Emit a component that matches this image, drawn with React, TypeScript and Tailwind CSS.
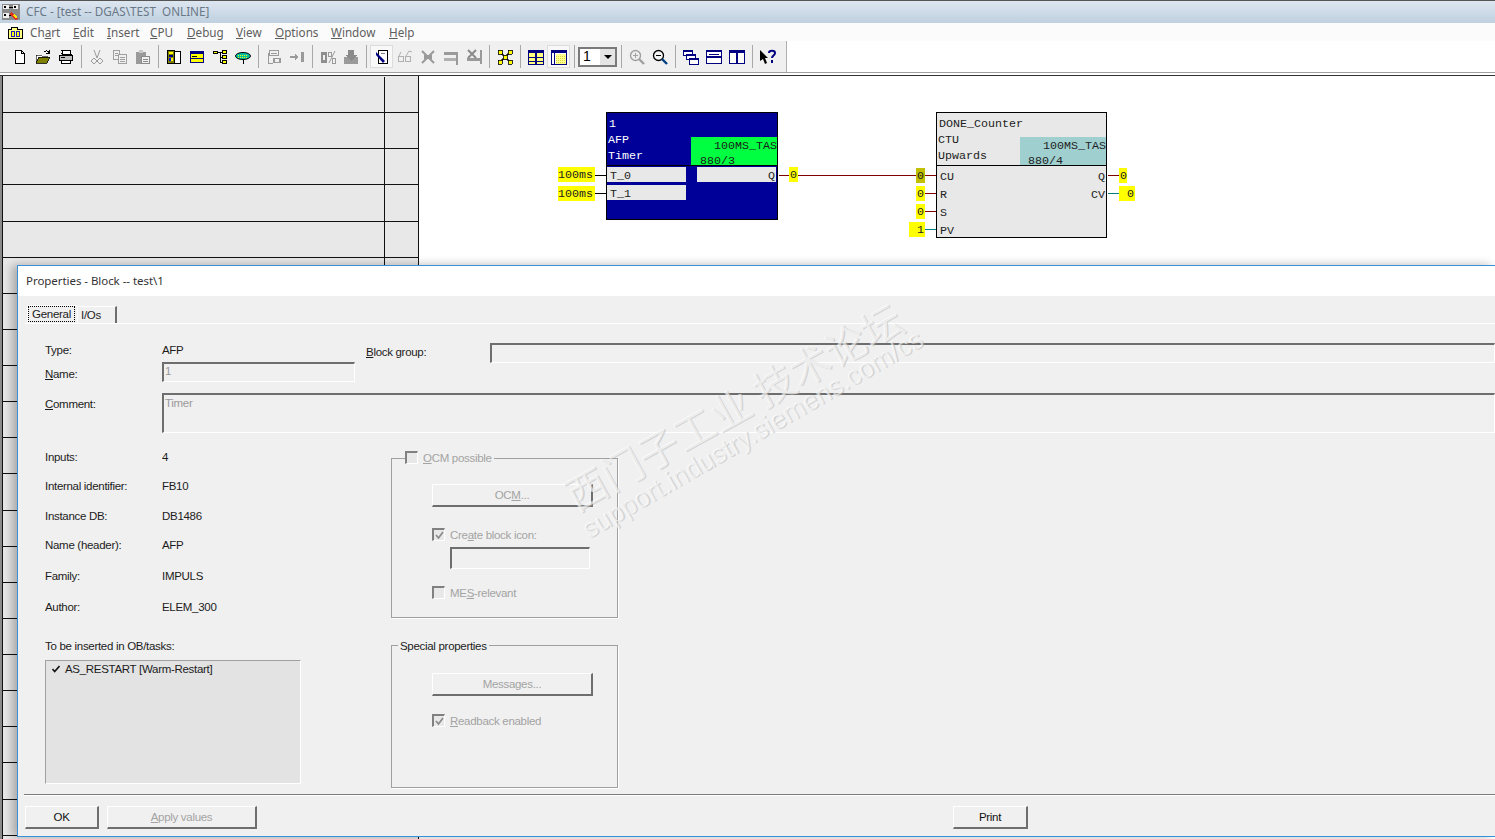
import type { ReactNode } from "react";

const ui = "font-['Liberation_Sans',Arial,sans-serif] text-[11.5px] tracking-[-0.3px]";
const mono = "font-['Liberation_Mono','Courier_New',monospace] text-[11.67px] leading-[14px]";

function Ico({ children }: { children: ReactNode }) {
  return (
    <svg width="16" height="16" viewBox="0 0 16 16" shapeRendering="crispEdges">
      {children}
    </svg>
  );
}

const icons: Record<string, ReactNode> = {
  new: (
    <path d="M3.5 1.5h6l3 3v10h-9zM9.5 1.5v3h3" fill="#fff" stroke="#000" />
  ),
  open: (
    <>
      <path d="M1 6h5l1 1h5v2H4l-3 5z" fill="#fff" stroke="#000" strokeWidth="0.6" />
      <path d="M1 14l3-6h11l-3 6z" fill="#808000" stroke="#000" strokeWidth="0.8" />
      <path d="M9 3c2-2 4-1 5 1M14 1v3h-3" fill="none" stroke="#000" />
    </>
  ),
  print: (
    <>
      <path d="M4 1.5h8l1 4H5z" fill="#fff" stroke="#000" />
      <path d="M1.5 6.5h13v5h-13z" fill="#c0c0c0" stroke="#000" />
      <path d="M3.5 11.5h9v3h-9z" fill="#fff" stroke="#000" />
      <path d="M3 8.5h4M3 4.5h1" stroke="#000" />
    </>
  ),
  cut: (
    <>
      <path d="M5 1l3 8M11 1L8 9" stroke="#9a9a9a" fill="none" shapeRendering="auto" />
      <circle cx="5" cy="12" r="2.2" fill="none" stroke="#9a9a9a" />
      <circle cx="11" cy="12" r="2.2" fill="none" stroke="#9a9a9a" />
    </>
  ),
  copy: (
    <>
      <path d="M1.5 1.5h6v9h-6z" fill="#f0f0f0" stroke="#a0a0a0" />
      <path d="M6.5 5.5h8v9h-8z" fill="#f0f0f0" stroke="#a0a0a0" />
      <path d="M3 4h3M3 6h3M8 8h5M8 10h5M8 12h5" stroke="#a0a0a0" />
    </>
  ),
  paste: (
    <>
      <path d="M1 3h10v12H1z" fill="#9a9a9a" />
      <path d="M4 1h4v3H4z" fill="#c8c8c8" />
      <path d="M6.5 7.5h8v7h-8z" fill="#f0f0f0" stroke="#8a8a8a" />
      <path d="M8 10h5M8 12h5" stroke="#8a8a8a" />
    </>
  ),
  book: (
    <>
      <path d="M1.5 1.5h7v13h-7z" fill="#808000" stroke="#000" />
      <path d="M3 3h4v2H3z" fill="#ffff00" />
      <path d="M3 6h4v2H3z" fill="#000080" />
      <path d="M3 9h2v3H3z" fill="#0000ff" />
      <path d="M5 9h2v3H5z" fill="#ffff00" />
      <path d="M8.5 2.5h6v12h-6z" fill="#fff" stroke="#000" />
    </>
  ),
  win: (
    <>
      <path d="M1.5 2.5h13v11h-13z" fill="#ffff00" stroke="#000080" />
      <path d="M1 2h14v3H1z" fill="#000080" />
      <path d="M3 7h5v1H3z" fill="#000" />
      <path d="M1 9h14v1H1z" fill="#000080" />
    </>
  ),
  tree: (
    <>
      <path d="M1.5 2.5h4v2h-4zM10.5 1.5h4v3h-4zM10.5 6.5h4v3h-4zM10.5 11.5h4v3h-4z" fill="#ffff00" stroke="#000" />
      <path d="M5 3.5h5M8 3.5v9M8 8h2.5M8 13h2.5" stroke="#000" fill="none" />
    </>
  ),
  ellipse: (
    <>
      <ellipse cx="8" cy="7" rx="7.5" ry="3.5" fill="#00c0a0" stroke="#000" shapeRendering="auto" />
      <path d="M3 6h10M3 8h10" stroke="#ffff00" strokeDasharray="1 1" />
      <path d="M8 10v5" stroke="#000" />
    </>
  ),
  grayA: (
    <>
      <path d="M3.5 1.5h9v5h-9zM2.5 3.5v11h4M8 9.5h6v4H8z" fill="none" stroke="#9a9a9a" strokeWidth="1.4" />
      <path d="M5 4h6" stroke="#9a9a9a" />
    </>
  ),
  grayB: (
    <>
      <path d="M1 8h8" stroke="#9a9a9a" strokeWidth="2" />
      <path d="M6 5l4 3-4 3zM12 3h3v10h-3z" fill="#9a9a9a" />
    </>
  ),
  grayC: (
    <>
      <path d="M1 3h6v11H1z" fill="#8e8e8e" />
      <path d="M3 6h2v5H3z" fill="#f0f0f0" />
      <path d="M8 3h3v4H8zM12 9h3v5h-3z" fill="none" stroke="#9a9a9a" />
      <path d="M9 14l6-12" stroke="#9a9a9a" shapeRendering="auto" />
    </>
  ),
  grayD: (
    <>
      <path d="M1 8h14v7H1z" fill="#9a9a9a" />
      <path d="M5 1h6v5h3l-6 6-6-6h3z" fill="#8a8a8a" />
    </>
  ),
  block: (
    <>
      <path d="M4.5 1.5h9v13h-9z" fill="#fff" stroke="#000" />
      <path d="M2 3l9 9-2 2-7-8z" fill="#000080" shapeRendering="auto" />
      <path d="M7 4h4" stroke="#808080" />
    </>
  ),
  glasses: (
    <>
      <circle cx="4" cy="10" r="3" fill="none" stroke="#b0b0b0" />
      <circle cx="11" cy="10" r="3" fill="none" stroke="#b0b0b0" />
      <path d="M2 7l2-4M9 7l3-5 3 1" fill="none" stroke="#b0b0b0" shapeRendering="auto" />
    </>
  ),
  crossG: (
    <>
      <path d="M2 2l12 12M14 2L2 14" stroke="#9a9a9a" strokeWidth="2" shapeRendering="auto" />
      <path d="M4 6h8v4H4z" fill="#9a9a9a" />
    </>
  ),
  barG: (
    <>
      <path d="M1 3h12v3H1z" fill="#9a9a9a" />
      <path d="M1 9h12v3H1z" fill="#b0b0b0" />
      <path d="M13 3h2v13h-2z" fill="#9a9a9a" />
    </>
  ),
  barX: (
    <>
      <path d="M1 9h13v3H1zM14 1h2v14h-2z" fill="#9a9a9a" />
      <path d="M2 1l8 8M10 1L2 9" stroke="#8a8a8a" strokeWidth="2" shapeRendering="auto" />
    </>
  ),
  fit: (
    <>
      <path d="M3 3l10 10M13 3L3 13" stroke="#000" strokeWidth="1.5" shapeRendering="auto" />
      <path d="M1 1h4v4H1zM11 1h4v4h-4zM1 11h4v4H1zM11 11h4v4h-4zM6 6h4v4H6z" fill="#ffff00" stroke="#000" strokeWidth="0.8" />
    </>
  ),
  table: (
    <>
      <path d="M.5 1.5h15v14H.5z" fill="#ffff80" stroke="#000080" />
      <path d="M0 1h16v3H0zM7 4h2v12H7zM0 8h16v1H0zM0 12h16v1H0z" fill="#000080" />
    </>
  ),
  tableB: (
    <>
      <path d="M.5 1.5h15v14H.5z" fill="#fff" stroke="#000080" />
      <path d="M0 1h16v3H0zM3 4h1v12H3z" fill="#000080" />
      <path d="M5 5h10v10H5z" fill="#ffff90" />
      <path d="M5 7h10M5 9h10M5 11h10M5 13h10" stroke="#d8d840" strokeDasharray="1 1" />
    </>
  ),
  zoomIn: (
    <>
      <circle cx="6.5" cy="6.5" r="5" fill="#eee" stroke="#a0a0a0" strokeWidth="1.4" shapeRendering="auto" />
      <path d="M4 6.5h5M6.5 4v5" stroke="#a0a0a0" />
      <path d="M10 10l5 5" stroke="#a0a0a0" strokeWidth="2.4" shapeRendering="auto" />
    </>
  ),
  zoomOut: (
    <>
      <circle cx="6.5" cy="6.5" r="5" fill="#f4f4f4" stroke="#000" strokeWidth="1.3" shapeRendering="auto" />
      <path d="M4 6.5h5" stroke="#000" />
      <path d="M10 10l5 5" stroke="#004080" strokeWidth="2.4" shapeRendering="auto" />
    </>
  ),
  cascade: (
    <>
      <path d="M.5 1.5h9v5h-9zM3.5 5.5h9v5h-9zM6.5 9.5h9v6h-9z" fill="#fff" stroke="#000080" />
      <path d="M0 1h10v2H0zM3 5h10v2H3zM6 9h10v2H6z" fill="#000080" />
    </>
  ),
  hsplit: (
    <>
      <path d="M.5 1.5h15v13H.5z" fill="#fff" stroke="#000080" />
      <path d="M0 1h16v2H0zM0 7h16v2H0z" fill="#000080" />
      <path d="M3 5h10" stroke="#000080" />
    </>
  ),
  vsplit: (
    <>
      <path d="M.5 1.5h15v13H.5z" fill="#fff" stroke="#000080" />
      <path d="M0 1h16v3H0zM7 4h2v11H7z" fill="#000080" />
    </>
  ),
  help: (
    <>
      <path d="M0 1l8 8H5l2 5-2 1-2-5-3 2z" fill="#000" shapeRendering="auto" />
      <path d="M9 4c0-3 6-3 6 0 0 2.500-3 2.500-3 5M12 11v3" fill="none" stroke="#000080" strokeWidth="2" shapeRendering="auto" />
    </>
  ),
};

function Tool({ name, pressed }: { name: string; pressed?: boolean }) {
  return (
    <div
      className={
        pressed
          ? "flex h-[23px] w-[23px] items-center justify-center border border-[#dcdcdc] bg-[#f8f8f8]"
          : "flex h-[23px] w-[23px] items-center justify-center"
      }
    >
      <Ico>{icons[name]}</Ico>
    </div>
  );
}

function Sep() {
  return (
    <div className="flex h-[23px] w-[8px] justify-center">
      <div className="h-full w-px bg-[#a8a8a8]" />
    </div>
  );
}

const menus: { pre: string; u: string; post: string; cls: string }[] = [
  { pre: "Ch", u: "a", post: "rt", cls: "w-[43px]" },
  { pre: "", u: "E", post: "dit", cls: "w-[34px]" },
  { pre: "", u: "I", post: "nsert", cls: "w-[43px]" },
  { pre: "", u: "C", post: "PU", cls: "w-[37px]" },
  { pre: "", u: "D", post: "ebug", cls: "w-[49px]" },
  { pre: "", u: "V", post: "iew", cls: "w-[39px]" },
  { pre: "", u: "O", post: "ptions", cls: "w-[56px]" },
  { pre: "", u: "W", post: "indow", cls: "w-[58px]" },
  { pre: "", u: "H", post: "elp", cls: "w-[40px]" },
];

const rowIds = Array.from({ length: 21 }, (_, i) => i);

function Sunken({ className, children }: { className: string; children?: ReactNode }) {
  return (
    <div
      className={`border-t-2 border-l-2 border-r border-b border-t-[#6e6e6e] border-l-[#6e6e6e] border-r-white border-b-white px-[1px] text-[#9a9a9a] ${className}`}
    >
      {children}
    </div>
  );
}

function Btn({ className, children, off }: { className: string; children: ReactNode; off?: boolean }) {
  return (
    <div
      className={`flex items-center justify-center border-t border-l border-t-white border-l-white border-r-2 border-b-2 border-r-[#6e6e6e] border-b-[#6e6e6e] pt-[1px] ${off ? "text-[#a3a3a3]" : "text-[#111]"} ${className}`}
    >
      {children}
    </div>
  );
}

function Check({ label, on }: { label: ReactNode; on?: boolean }) {
  return (
    <div className="flex h-[13px] items-center text-[#a3a3a3]">
      <div className="flex h-[13px] w-[13px] items-center justify-center border-t-2 border-l-2 border-r border-b border-t-[#808080] border-l-[#808080] border-r-white border-b-white bg-[#e8e8e8]">
        {on && (
          <svg width="9" height="9" viewBox="0 0 9 9">
            <path d="M1 4l2.500 3L8 1" fill="none" stroke="#8a8a8a" strokeWidth="1.7" />
          </svg>
        )}
      </div>
      <span className="ml-[5px] pt-[2px]">{label}</span>
    </div>
  );
}

const infoRows = [
  { label: <>Inputs:</>, value: "4", cls: "mt-[17px]" },
  { label: <>Internal identifier:</>, value: "FB10", cls: "mt-[15px]" },
  { label: <>Instance DB:</>, value: "DB1486", cls: "mt-[16px]" },
  { label: <>Name (header):</>, value: "AFP", cls: "mt-[15px]" },
  { label: <>Family:</>, value: "IMPULS", cls: "mt-[17px]" },
  { label: <>Author:</>, value: "ELEM_300", cls: "mt-[17px]" },
];

function Pin({ text, className }: { text: string; className: string }) {
  return <div className={`absolute h-[15px] pt-[1px] ${mono} ${className}`}>{text}</div>;
}

function Diagram() {
  return (
    <div className="relative min-w-0 flex-1 bg-white">
      <svg className="absolute inset-0" width="1077" height="180" shapeRendering="crispEdges">
        <path d="M176 99.500h12M176 117.500h12" stroke="#000" />
        <path d="M360 99.500h10M379 99.500h119M506 99.500h11M506 117.500h11M506 135.500h11M689 99.500h11" stroke="#800000" />
        <path d="M506 153.500h11M689 117.500h11" stroke="#008080" />
      </svg>

      {/* left block, instance 1 */}
      <div className={`absolute left-[187px] top-[36px] h-[108px] w-[172px] border border-black bg-[#000099] text-white ${mono}`}>
        <div className="absolute left-[1px] top-[4px]">
          <div className="pl-[1px]">1</div>
          <div className="mt-[2px]">AFP</div>
          <div className="mt-[2px]">Timer</div>
        </div>
        <div className="absolute left-[84px] top-[24px] h-[28px] w-[86px] overflow-hidden bg-[#00ff40] text-[#1a1a1a]">
          <div className="pl-[23px] pt-[2px]">100MS_TAS</div>
          <div className="mt-[1px] pl-[9px]">880/3</div>
        </div>
        <div className="absolute left-0 right-0 top-[52px] h-px bg-black" />
        <div className="absolute left-0 top-[54px] h-[15px] w-[79px] bg-[#e8e8e8] pl-[3px] pt-[2px] text-[#222]">T_0</div>
        <div className="absolute left-0 top-[72px] h-[15px] w-[79px] bg-[#e8e8e8] pl-[3px] pt-[2px] text-[#222]">T_1</div>
        <div className="absolute left-[90px] top-[54px] h-[15px] w-[79px] bg-[#e8e8e8] pr-[1px] pt-[2px] text-right text-[#222]">Q</div>
      </div>
      <Pin text="100ms" className="left-[139px] top-[91px] w-[37px] bg-[#ffff00] text-[#222]" />
      <Pin text="100ms" className="left-[139px] top-[110px] w-[37px] bg-[#ffff00] text-[#222]" />
      <Pin text="0" className="left-[370px] top-[91px] w-[9px] bg-[#ffff00] pl-[1px] text-[#222]" />

      {/* counter block */}
      <div className={`absolute left-[517px] top-[36px] h-[126px] w-[171px] border border-black bg-[#e8e8e8] text-[#222] ${mono}`}>
        <div className="absolute left-[2px] top-[4px]">DONE_Counter</div>
        <div className="absolute left-[1px] top-[20px]">CTU</div>
        <div className="absolute left-[1px] top-[36px]">Upwards</div>
        <div className="absolute left-[83px] top-[24px] h-[28px] w-[86px] overflow-hidden bg-[#9fcfcf]">
          <div className="pl-[23px] pt-[2px]">100MS_TAS</div>
          <div className="mt-[1px] pl-[8px]">880/4</div>
        </div>
        <div className="absolute left-0 right-0 top-[52px] h-px bg-black" />
        <div className="absolute left-[3px] top-[57px]">CU</div>
        <div className="absolute left-[3px] top-[75px]">R</div>
        <div className="absolute left-[3px] top-[93px]">S</div>
        <div className="absolute left-[3px] top-[111px]">PV</div>
        <div className="absolute right-[1px] top-[57px]">Q</div>
        <div className="absolute right-[1px] top-[75px]">CV</div>
      </div>
      <Pin text="0" className="left-[497px] top-[92px] w-[9px] bg-[#c0c000] pl-[1px] text-[#222]" />
      <Pin text="0" className="left-[497px] top-[110px] w-[9px] bg-[#ffff00] pl-[1px] text-[#222]" />
      <Pin text="0" className="left-[497px] top-[128px] w-[9px] bg-[#ffff00] pl-[1px] text-[#222]" />
      <Pin text="1" className="left-[490px] top-[146px] w-[16px] bg-[#ffff00] pr-[1px] text-right text-[#222]" />
      <Pin text="0" className="left-[700px] top-[92px] w-[8px] bg-[#ffff00] pl-[1px] text-[#222]" />
      <Pin text="0" className="left-[700px] top-[110px] w-[16px] bg-[#ffff00] pr-[1px] text-right text-[#222]" />
    </div>
  );
}

function PropertiesDialog() {
  return (
    <div className={`absolute bottom-[2px] left-[17px] right-0 top-[265px] flex flex-col border-l border-t border-b border-[#3b8fd9] bg-[#f0f0f0] text-[#1c1c1c] shadow-[-5px_0_9px_rgba(0,0,0,0.28)] ${ui}`}>
      <div className="flex h-[30px] items-center bg-white pl-[8px] font-['Noto_Sans',sans-serif] text-[11.5px] tracking-[-0.05px] text-[#333]">Properties - Block -- test\1</div>

      <div className="ml-[7px] mt-[9px] flex h-[19px] border-b border-white pl-[2px]">
        <div className="h-[18px] w-[50px] rounded-t-[2px] border-l border-t border-white">
          <div className="flex h-[16px] w-[47px] items-center justify-center border border-dotted border-black pb-[1px] leading-[14px]">General</div>
        </div>
        <div className="mt-[1px] h-[17px] w-[40px] border-l border-t border-r-2 border-l-white border-t-white border-r-[#6e6e6e] pl-[3px] pt-[1px] leading-[14px]">I/Os</div>
      </div>

      <div className="pl-[27px] pt-[19px]">
        <div className="flex">
          <div className="w-[310px]">
            <div className="flex h-[14px] leading-[14px]">
              <span className="w-[117px]">Type:</span>
              <span>AFP</span>
            </div>
            <div className="mt-[5px] flex">
              <span className="w-[117px] pt-[5px] leading-[14px]"><u>N</u>ame:</span>
              <Sunken className="h-[20px] w-[193px] leading-[14px]">1</Sunken>
            </div>
          </div>
          <span className="ml-[11px] w-[124px] pt-[2px] leading-[14px]"><u>B</u>lock group:</span>
          <Sunken className="h-[20px] flex-1" />
        </div>
        <div className="mt-[11px] flex">
          <span className="w-[117px] pt-[4px] leading-[14px]"><u>C</u>omment:</span>
          <Sunken className="h-[40px] flex-1 pl-[1px] pt-[1px] leading-[14px]">Timer</Sunken>
        </div>

        <div className="flex h-[361px]">
          <div className="w-[346px]">
            {infoRows.map((r) => (
              <div key={r.value + r.cls} className={`flex h-[14px] leading-[14px] ${r.cls}`}>
                <span className="w-[117px]">{r.label}</span>
                <span>{r.value}</span>
              </div>
            ))}
            <div className="mt-[25px] h-[14px] leading-[14px]">To be inserted in OB/tasks:</div>
            <div className="mt-[7px] h-[124px] w-[256px] border border-b-white border-r-white border-l-[#a0a0a0] border-t-[#a0a0a0] bg-[#e3e3e3]">
              <div className="flex items-center pl-[6px] pt-[1px] leading-[14px]">
                <svg width="8" height="8" viewBox="0 0 8 8">
                  <path d="M.5 4l2.200 2.600L7.500 1" fill="none" stroke="#111" strokeWidth="1.6" />
                </svg>
                <span className="ml-[5px]">AS_RESTART [Warm-Restart]</span>
              </div>
            </div>
          </div>

          <div className="w-[227px]">
            <div className="relative mt-[25px] h-[160px] border border-[#a0a0a0] pl-[40px] shadow-[1px_1px_0_#fff]">
              <div className="absolute -top-[8px] left-[13px] flex bg-[#f0f0f0] pr-[2px]">
                <Check label={<><u>O</u>CM possible</>} />
              </div>
              <Btn className="mt-[25px] h-[23px] w-[161px]" off>
                <span>OC<u>M</u>...</span>
              </Btn>
              <div className="mt-[21px]">
                <Check on label={<>Cre<u>a</u>te block icon:</>} />
              </div>
              <Sunken className="ml-[18px] mt-[6px] h-[22px] w-[140px]" />
              <div className="mt-[17px]">
                <Check label={<>ME<u>S</u>-relevant</>} />
              </div>
            </div>
            <div className="relative mt-[27px] h-[143px] border border-[#a0a0a0] pl-[40px] shadow-[1px_1px_0_#fff]">
              <div className="absolute -top-[7px] left-[6px] bg-[#f0f0f0] px-[2px] leading-[14px]">Special properties</div>
              <Btn className="mt-[27px] h-[23px] w-[161px]" off>
                <span>Messages...</span>
              </Btn>
              <div className="mt-[18px]">
                <Check on label={<><u>R</u>eadback enabled</>} />
              </div>
            </div>
          </div>
        </div>
      </div>

      <div className="ml-[6px] h-[2px] border-b border-white bg-[#7d7d7d]" />
      <div className="ml-[7px] mt-[10px] flex">
        <Btn className="h-[23px] w-[74px]">OK</Btn>
        <Btn className="ml-[8px] h-[23px] w-[150px]" off>
          <span><u>A</u>pply values</span>
        </Btn>
        <Btn className="ml-[696px] h-[23px] w-[75px]">Print</Btn>
      </div>
    </div>
  );
}

export default function App() {
  return (
    <div className="relative flex h-[839px] w-full flex-col overflow-hidden bg-white">
      <div className="flex h-[23px] items-center border-t border-[#555] bg-gradient-to-b from-[#dde6f0] to-[#bfd0e0] pl-[2px] font-['Noto_Sans',sans-serif] text-[11.7px] text-[#6a7886]">
        <svg width="18" height="16" viewBox="0 0 18 16" shapeRendering="crispEdges">
          <path d="M0 0h18v16H0z" fill="#8a8a8a" />
          <path d="M1 1h6v4H1zM1 9h6v5H1zM11 1h5v4h-5z" fill="#f0f0f0" />
          <path d="M2 2h2v2H2zM2 10h2v2H2zM12 2h2v2h-2z" fill="#000" />
          <path d="M7 3h4M7 11h3" stroke="#000" />
          <path d="M9 8l7 7-3 1-6-6z" fill="#e03020" />
          <path d="M12 11l3 3" stroke="#ffe000" strokeWidth="2" />
        </svg>
        <span className="ml-[6px] whitespace-pre">CFC - [test -- DGAS\TEST  ONLINE]</span>
      </div>

      <div className="flex h-[18px] items-center bg-[#fbfbfb] pl-[8px] pt-[1px] font-['Noto_Sans',sans-serif] text-[11.7px] text-[#5e5e5e]">
        <svg width="16" height="14" viewBox="0 0 16 14" shapeRendering="crispEdges">
          <path d="M.5 3.500h3v-2h6v2h5v9h-14z" fill="#ffff80" stroke="#000" />
          <path d="M3 5v5h3V5zM8 5v5h3V5z" fill="#ffff00" stroke="#2020c0" />
        </svg>
        <div className="ml-[6px] flex">
          {menus.map((m) => (
            <span key={m.u + m.post} className={m.cls}>
              {m.pre}
              <u>{m.u}</u>
              {m.post}
            </span>
          ))}
        </div>
      </div>

      <div className="flex h-[32px] items-center border-b border-[#a0a0a0] bg-white">
        <div className="flex h-full w-[787px] items-center border-r border-[#b0b0b0] bg-[#f0f0f0] pl-[8px]">
          <Tool name="new" />
          <Tool name="open" />
          <Tool name="print" />
          <Sep />
          <Tool name="cut" />
          <Tool name="copy" />
          <Tool name="paste" />
          <Sep />
          <Tool name="book" />
          <Tool name="win" />
          <Tool name="tree" />
          <Tool name="ellipse" />
          <Sep />
          <Tool name="grayA" />
          <Tool name="grayB" />
          <Sep />
          <Tool name="grayC" />
          <Tool name="grayD" />
          <Sep />
          <Tool name="block" pressed />
          <Tool name="glasses" />
          <Tool name="crossG" />
          <Tool name="barG" />
          <Tool name="barX" />
          <Sep />
          <Tool name="fit" />
          <Sep />
          <Tool name="table" />
          <Tool name="tableB" pressed />
          <Sep />
          <div className="flex h-[20px] w-[39px] items-center border-2 border-[#7a7a7a] bg-white pl-[3px] font-['Liberation_Sans',sans-serif] text-[14px]">
            <span className="flex-1">1</span>
            <div className="flex h-full w-[16px] items-center justify-center border-l border-white bg-[#e4e4e4]">
              <div className="h-0 w-0 border-x-[4px] border-t-[4px] border-x-transparent border-t-black" />
            </div>
          </div>
          <Sep />
          <Tool name="zoomIn" />
          <Tool name="zoomOut" />
          <Sep />
          <Tool name="cascade" />
          <Tool name="hsplit" />
          <Tool name="vsplit" />
          <Sep />
          <Tool name="help" />
        </div>
      </div>

      <div className="h-[2px] bg-white" />
      <div className="flex min-h-0 flex-1 border-t border-[#333]">
        <div className="flex w-[419px] shrink-0 flex-col overflow-hidden border-l-2 border-r border-l-[#8a8a8a] border-r-[#111] bg-[#e8e8e8] pt-[1px] shadow-[inset_1px_0_0_#111]">
          {rowIds.map((i) => (
            <div key={i} className="flex h-[36.13px] shrink-0 border-b border-[#111]">
              <div className="w-[383px] border-r border-[#111]" />
            </div>
          ))}
        </div>
        <Diagram />
      </div>

      <PropertiesDialog />

      {/* forum watermark across the dialog */}
      <div className="pointer-events-none absolute left-[578px] top-[472px] origin-bottom-left -rotate-[29deg] whitespace-pre font-['Noto_Sans_CJK_SC',sans-serif] text-[41px] leading-[44px] text-white/60 [text-shadow:1px_1px_0_rgba(170,170,170,0.45)]">
        西门子工业 技术论坛
      </div>
      <div className="pointer-events-none absolute left-[592px] top-[514px] origin-bottom-left -rotate-[30deg] whitespace-pre font-['Liberation_Sans',sans-serif] text-[26.8px] leading-[30px] text-white/60 [text-shadow:1px_1px_0_rgba(170,170,170,0.45)]">
        support.industry.siemens.com/cs
      </div>
    </div>
  );
}
